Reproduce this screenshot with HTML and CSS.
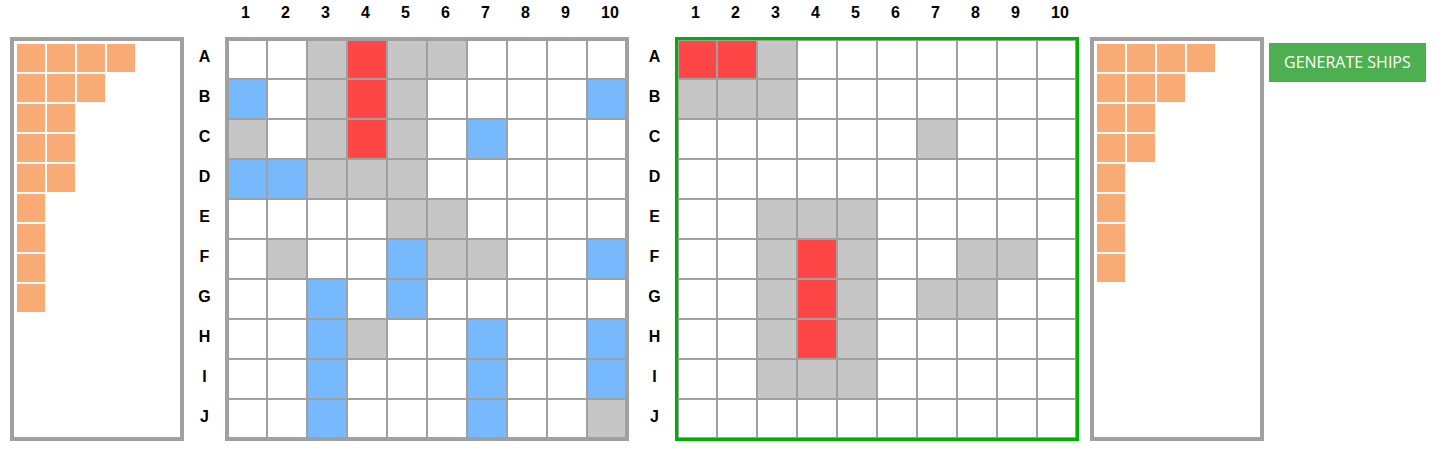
FILE: index.html
```html
<!DOCTYPE html>
<html lang="en">
<head>
    <meta charset="UTF-8">
    <meta name="viewport" content="width=device-width, initial-scale=1.0">
    <title>Battleship</title>
    <link rel="stylesheet" href="styles.css">
</head>
<body>

    <div class="game">
        <!-- Frota do jogador -->
        <div class="fleet" id="fleetPlayer"></div>

        <div class="board" id="boardPlayer">
            <div class="cols"></div>
            <div class="board-body">
                <div class="rows"></div>
                <div class="grid"></div>
            </div>
        </div>

        <div class="board board-enemy" id="boardEnemy">
            <div class="cols"></div>
            <div class="board-body">
                <div class="rows"></div>
                <div class="grid active"></div>
            </div>
        </div>

        <!-- Frota do inimigo -->
        <div class="fleet fleet-enemy" id="fleetEnemy"></div>

        <button class="generate-button">GENERATE SHIPS</button>
    </div>

    <script>
        const letters = "ABCDEFGHIJ";

        // . = water, s = ship, x = hit, o = miss
        const playerBoard = [
            "..oxoo....",
            "s.oxo....s",
            "o.oxo.s...",
            "ssooo.....",
            "....oo....",
            ".o..soo..s",
            "..s.s.....",
            "..so..s..s",
            "..s...s..s",
            "..s...s..o"
        ];

        const enemyBoard = [
            "xxo.......",
            "ooo.......",
            "......o...",
            "..........",
            "..ooo.....",
            "..oxo..oo.",
            "..oxo.oo..",
            "..oxo.....",
            "..ooo.....",
            ".........."
        ];

        const cellTypes = { "s": "ship", "x": "hit", "o": "miss" };

        function buildBoard(id, data) {
            const board = document.getElementById(id);
            const cols = board.querySelector(".cols");
            const rows = board.querySelector(".rows");
            const grid = board.querySelector(".grid");

            for (let i = 1; i <= 10; i++) {
                const col = document.createElement("div");
                col.className = "col";
                col.textContent = i;
                cols.appendChild(col);
            }

            data.forEach((line, r) => {
                const label = document.createElement("div");
                label.className = "row-label";
                label.textContent = letters[r];
                rows.appendChild(label);

                for (const ch of line) {
                    const cell = document.createElement("div");
                    cell.className = "cell";
                    if (cellTypes[ch]) cell.classList.add(cellTypes[ch]);
                    grid.appendChild(cell);
                }
            });
        }

        function buildFleet(id, ships) {
            const fleet = document.getElementById(id);
            ships.forEach(size => {
                const row = document.createElement("div");
                row.className = "fleet-row";
                for (let i = 0; i < size; i++) {
                    const deck = document.createElement("div");
                    deck.className = "deck";
                    row.appendChild(deck);
                }
                fleet.appendChild(row);
            });
        }

        buildBoard("boardPlayer", playerBoard);
        buildBoard("boardEnemy", enemyBoard);
        buildFleet("fleetPlayer", [4, 3, 2, 2, 2, 1, 1, 1, 1]);
        buildFleet("fleetEnemy", [4, 3, 2, 2, 1, 1, 1, 1]);
    </script>

</body>
</html>
```

FILE: styles.css
```css
* {
    margin: 0;
    padding: 0;
    box-sizing: border-box;
    font-family: 'Liberation Sans', Arial, sans-serif;
}

body {
    background-color: #fff;
    color: #000;
}

.game {
    display: flex;
    align-items: flex-start;
    padding-left: 10px;
}

/* Frotas */
.fleet {
    width: 174px;
    height: 404px;
    margin-top: 37px;
    padding: 3px;
    border: 4px solid #a0a0a0;
    display: flex;
    flex-direction: column;
    gap: 2px;
}

.fleet-enemy {
    margin-left: 11px;
}

.fleet-row {
    display: flex;
    gap: 2px;
}

.deck {
    width: 28px;
    height: 28px;
    background-color: #f9ab75;
}

/* Tabuleiros */
.board-enemy {
    margin-left: 5px;
}

.cols {
    display: flex;
    height: 37px;
    margin-left: 41px;
}

.col {
    width: 40px;
    padding-left: 16px;
    line-height: 26px;
    font-size: 16px;
    font-weight: bold;
}

.board-body {
    display: flex;
}

.rows {
    width: 41px;
}

.row-label {
    height: 40px;
    line-height: 40px;
    text-align: center;
    font-size: 16px;
    font-weight: bold;
}

.grid {
    display: grid;
    grid-template-columns: 37px repeat(8, 38px) 37px;
    grid-template-rows: 37px repeat(8, 38px) 37px;
    gap: 2px;
    padding: 1px;
    border: 3px solid #a0a0a0;
    background-color: #a0a0a0;
}

.grid.active {
    border-color: #00b000;
}

.cell {
    background-color: #fff;
}

.cell.ship {
    background-color: #76b9fc;
}

.cell.hit {
    background-color: #ff4646;
}

.cell.miss {
    background-color: #c6c6c6;
}

/* Botão */
.generate-button {
    margin: 43px 0 0 5px;
    padding: 9px 15px;
    border: none;
    background-color: #4caf50;
    color: #fff;
    font-family: 'Open Sans', sans-serif;
    font-size: 16px;
    line-height: 21px;
    cursor: pointer;
}
```
